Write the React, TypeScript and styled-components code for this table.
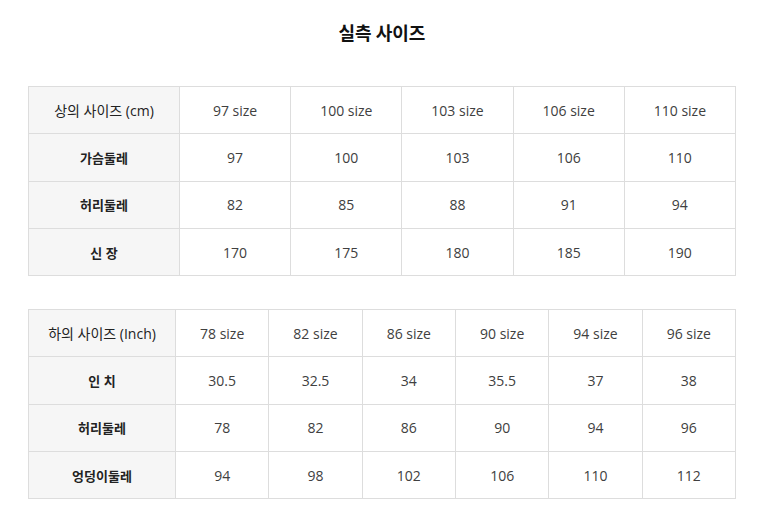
import styled, { createGlobalStyle } from 'styled-components'

const GlobalStyle = createGlobalStyle`
    html, body {
        margin: 0;
        padding: 0;
        background: #ffffff;
    }
    body {
        font-family: "Open Sans", "Noto Sans CJK KR", sans-serif;
        color: #333333;
    }
`

const Page = styled.div`
    width: 767px;
    padding: 0 31px 0 28px;
    box-sizing: border-box;
`

const Title = styled.h3`
    margin: 0;
    padding-top: 21px;
    height: 64px;
    box-sizing: border-box;
    font-family: "Noto Sans CJK KR", sans-serif;
    font-size: 18px;
    line-height: 22px;
    font-weight: 700;
    color: #111111;
    text-align: center;
`

const Table = styled.table<{ $gap: number }>`
    width: 708px;
    margin-top: ${(p) => p.$gap}px;
    border-collapse: collapse;
    table-layout: fixed;
    border: 1px solid #dddddd;
`

const Row = styled.tr`
    height: 47.3px;
`

const HeadCell = styled.th<{ $strong?: boolean }>`
    padding: 0;
    background: #f6f6f6;
    border: 1px solid #dddddd;
    font-size: ${(p) => (p.$strong ? '13px' : '14px')};
    font-weight: ${(p) => (p.$strong ? 700 : 400)};
    color: #222222;
    text-align: center;
    vertical-align: middle;
`

const Cell = styled.td`
    padding: 0;
    border: 1px solid #dddddd;
    font-size: 14px;
    color: #404040;
    text-align: center;
    vertical-align: middle;
`

type SizeTableProps = {
    gap: number
    headWidth: number
    label: string
    sizes: string[]
    rows: { name: string; values: string[] }[]
}

function SizeTable({ gap, headWidth, label, sizes, rows }: SizeTableProps) {
    return (
        <Table $gap={gap}>
            <colgroup>
                <col style={{ width: headWidth }} />
                {sizes.map((s) => (
                    <col key={s} />
                ))}
            </colgroup>
            <tbody>
                <Row>
                    <HeadCell>{label}</HeadCell>
                    {sizes.map((s) => (
                        <Cell key={s}>{s}</Cell>
                    ))}
                </Row>
                {rows.map((r) => (
                    <Row key={r.name}>
                        <HeadCell $strong>{r.name}</HeadCell>
                        {r.values.map((v, i) => (
                            <Cell key={i}>{v}</Cell>
                        ))}
                    </Row>
                ))}
            </tbody>
        </Table>
    )
}

const topRows = [
    { name: '가슴둘레', values: ['97', '100', '103', '106', '110'] },
    { name: '허리둘레', values: ['82', '85', '88', '91', '94'] },
    { name: '신 장', values: ['170', '175', '180', '185', '190'] },
]

const bottomRows = [
    { name: '인 치', values: ['30.5', '32.5', '34', '35.5', '37', '38'] },
    { name: '허리둘레', values: ['78', '82', '86', '90', '94', '96'] },
    { name: '엉덩이둘레', values: ['94', '98', '102', '106', '110', '112'] },
]

export default function App() {
    return (
        <>
            <GlobalStyle />
            <Page>
                <Title>실측 사이즈</Title>
                <SizeTable
                    gap={22}
                    headWidth={151}
                    label='상의 사이즈 (cm)'
                    sizes={['97 size', '100 size', '103 size', '106 size', '110 size']}
                    rows={topRows}
                />
                <SizeTable
                    gap={33}
                    headWidth={147}
                    label='하의 사이즈 (Inch)'
                    sizes={['78 size', '82 size', '86 size', '90 size', '94 size', '96 size']}
                    rows={bottomRows}
                />
            </Page>
        </>
    )
}
